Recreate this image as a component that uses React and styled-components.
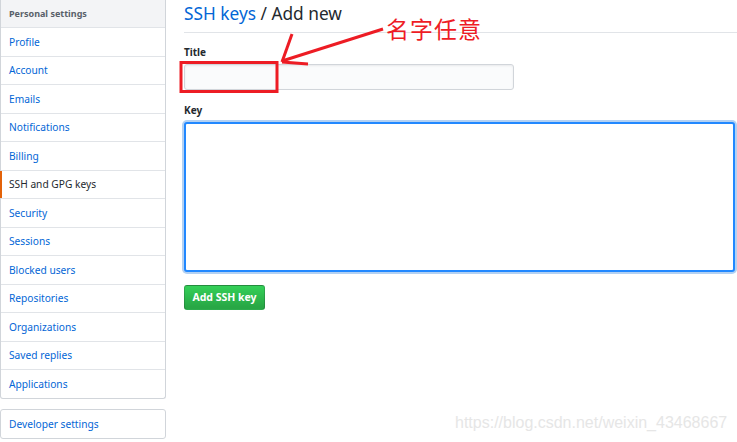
import React from "react";
import styled, { createGlobalStyle } from "styled-components";

const Global = createGlobalStyle`
  html, body { margin: 0; padding: 0; background: #fff; }
  body { font-family: "Noto Sans", "Open Sans", sans-serif; color: #24292e; }
  * { box-sizing: border-box; }
`;

const Page = styled.div`
  position: relative;
  width: 737px;
  height: 442px;
  overflow: hidden;
  display: flex;
  align-items: flex-start;
`;

const Sidebar = styled.div`
  width: 166px;
  flex: none;
  display: flex;
  flex-direction: column;
  gap: 10px;
`;

const Menu = styled.nav`
  border: 1px solid #d1d5da;
  border-top: none;
  border-radius: 0 0 3px 3px;
  display: flex;
  flex-direction: column;
  background: #fff;
`;

const MenuHeader = styled.div`
  height: 28px;
  display: flex;
  align-items: center;
  padding-left: 8px;
  background: #f3f4f6;
  border-bottom: 1px solid #e1e4e8;
  color: #586069;
  font-size: 9px;
  font-weight: 700;
`;

const MenuItem = styled.a`
  position: relative;
  display: flex;
  align-items: center;
  padding-left: 8px;
  font-size: 10.2px;
  text-decoration: none;
  color: ${(p) => (p.$active ? "#24292e" : "#0366d6")};
  border-bottom: ${(p) => (p.$last ? "none" : "1px solid #e1e4e8")};
  height: ${(p) => (p.$last ? "27.5px" : "28.5px")};
  &::before {
    content: "";
    display: ${(p) => (p.$active ? "block" : "none")};
    position: absolute;
    left: -1px;
    top: 0;
    bottom: 0;
    width: 2px;
    background: #e36209;
  }
`;

const DevBox = styled.div`
  border: 1px solid #d1d5da;
  border-radius: 3px;
  height: 30px;
  display: flex;
  align-items: center;
  padding-left: 8px;
  font-size: 10.2px;
  color: #0366d6;
`;

const Main = styled.main`
  flex: 1;
  margin-left: 18px;
  display: flex;
  flex-direction: column;
`;

const Heading = styled.h2`
  margin: 0;
  height: 33px;
  padding-top: 2px;
  border-bottom: 1px solid #e1e4e8;
  font-size: 17.3px;
  font-weight: 400;
  line-height: 24px;
  color: #24292e;
`;

const Crumb = styled.span`
  color: #0366d6;
`;

const Form = styled.form`
  display: flex;
  flex-direction: column;
  padding-top: 12px;
`;

const Label = styled.label`
  font-size: 10px;
  font-weight: 700;
  line-height: 14px;
  margin-bottom: 5px;
  color: #24292e;
`;

const TextInput = styled.input`
  width: 330px;
  height: 26px;
  border: 1px solid #d1d5da;
  border-radius: 3px;
  background: #fafbfc;
  box-shadow: inset 0 1px 2px rgba(27, 31, 35, 0.075);
  margin: 0 0 13px;
  outline: none;
`;

const TextArea = styled.textarea`
  width: 551px;
  height: 150px;
  margin: 0 0 12px;
  border: 2px solid #2188ff;
  border-radius: 3px;
  box-shadow: 0 0 0 2px rgba(3, 102, 214, 0.3);
  resize: none;
  outline: none;
`;

const Button = styled.button`
  width: 81px;
  height: 25px;
  padding: 0;
  border: 1px solid rgba(27, 31, 35, 0.2);
  border-radius: 3px;
  background: linear-gradient(-180deg, #34d058 0%, #28a745 90%);
  color: #fff;
  font-family: "Noto Sans", sans-serif;
  font-size: 10.5px;
  font-weight: 700;
`;

const Overlay = styled.svg`
  position: absolute;
  left: 0;
  top: 0;
  pointer-events: none;
`;

const Note = styled.div`
  position: absolute;
  left: 386px;
  top: 13px;
  font-family: "Noto Sans CJK SC", sans-serif;
  font-size: 23px;
  line-height: 30px;
  letter-spacing: 1px;
  color: #ee1c25;
`;

const Watermark = styled.div`
  position: absolute;
  left: 455px;
  top: 414px;
  font-family: "Liberation Sans", Arial, sans-serif;
  font-size: 16px;
  line-height: 18px;
  color: #e6e6e6;
`;

const items = [
  "Profile",
  "Account",
  "Emails",
  "Notifications",
  "Billing",
  "SSH and GPG keys",
  "Security",
  "Sessions",
  "Blocked users",
  "Repositories",
  "Organizations",
  "Saved replies",
  "Applications",
];

export default function App() {
  return (
    <>
      <Global />
      <Page>
        <Sidebar>
          <Menu>
            <MenuHeader>Personal settings</MenuHeader>
            {items.map((it, i) => (
              <MenuItem
                key={it}
                $active={it === "SSH and GPG keys"}
                $last={i === items.length - 1}
              >
                {it}
              </MenuItem>
            ))}
          </Menu>
          <DevBox>Developer settings</DevBox>
        </Sidebar>
        <Main>
          <Heading>
            <Crumb>SSH keys</Crumb> / Add new
          </Heading>
          <Form>
            <Label>Title</Label>
            <TextInput />
            <Label>Key</Label>
            <TextArea />
            <div>
              <Button type="button">Add SSH key</Button>
            </div>
          </Form>
        </Main>
        <Overlay width="737" height="442" viewBox="0 0 737 442">
          <rect x="181" y="62.5" width="96" height="29" fill="none" stroke="#ed1c24" strokeWidth="3" />
          <g stroke="#ed1c24" strokeWidth="3" fill="none" strokeLinecap="butt">
            <line x1="383" y1="29" x2="282" y2="61" />
            <line x1="282" y1="62" x2="292" y2="34" />
            <line x1="282" y1="62" x2="308" y2="64" />
          </g>
        </Overlay>
        <Note>名字任意</Note>
        <Watermark>https://blog.csdn.net/weixin_43468667</Watermark>
      </Page>
    </>
  );
}
